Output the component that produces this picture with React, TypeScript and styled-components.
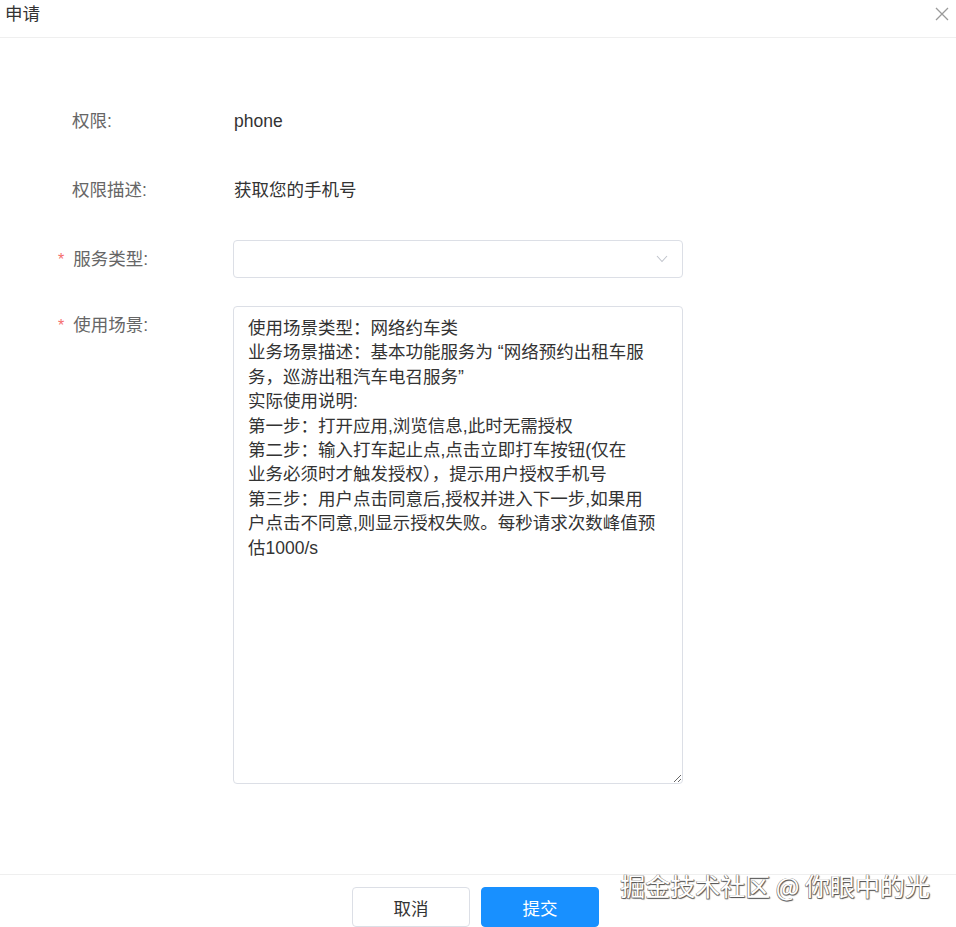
import styled, { createGlobalStyle } from "styled-components";

const GlobalStyle = createGlobalStyle`
  html, body {
    margin: 0;
    padding: 0;
    background: #ffffff;
  }
  body {
    font-family: "Liberation Sans", "Noto Sans CJK SC", sans-serif;
  }
`;

const Dialog = styled.div`
  position: relative;
  height: 927px;
  display: flex;
  flex-direction: column;
  background: #fff;
  overflow: hidden;
`;

const Header = styled.header`
  height: 35px;
  border-bottom: 1px solid #efefef;
  display: flex;
  align-items: flex-start;
  justify-content: space-between;
  padding: 2px 6px 0 5px;
  box-sizing: content-box;
`;

const Title = styled.h2`
  margin: 0;
  font-size: 17.5px;
  line-height: 24px;
  font-weight: 400;
  color: #333;
`;

const CloseBtn = styled.button`
  border: none;
  background: none;
  padding: 0;
  margin-top: 4px;
  width: 16px;
  height: 16px;
  cursor: pointer;
`;

const Body = styled.main`
  flex: 1;
  padding: 64px 0 0 72px;
  display: flex;
  flex-direction: column;
  gap: 31px;
`;

const FormItem = styled.div<{ $tight?: boolean }>`
  display: grid;
  grid-template-columns: 161px 450px;
  align-items: start;
  margin-top: ${(p) => (p.$tight ? "-4px" : "0")};
`;

const Label = styled.label`
  font-size: 17.5px;
  line-height: 38px;
  color: #666;
  white-space: nowrap;
`;

const Star = styled.span`
  color: #f56c6c;
  font-size: 16px;
  margin-left: -14px;
  margin-right: 9px;
`;

const Value = styled.div`
  font-size: 17.5px;
  line-height: 38px;
  color: #333;
  padding-left: 1px;
`;

const Select = styled.div`
  height: 38px;
  box-sizing: border-box;
  border: 1px solid #dcdfe6;
  border-radius: 4px;
  display: flex;
  align-items: center;
  justify-content: flex-end;
  padding-right: 14px;
  background: #fff;
`;

const TextArea = styled.textarea`
  width: 450px;
  height: 478px;
  box-sizing: border-box;
  border: 1px solid #dcdfe6;
  border-radius: 4px;
  padding: 9px 14px 7px 14px;
  font-family: "Liberation Sans", "Noto Sans CJK SC", sans-serif;
  font-size: 17.5px;
  line-height: 24.4px;
  color: #333;
  resize: both;
  outline: none;
  overflow: hidden;
`;

const Footer = styled.footer`
  height: 53px;
  border-top: 1px solid #efefef;
  display: flex;
  justify-content: center;
  align-items: flex-start;
  gap: 11px;
  padding-top: 12px;
  box-sizing: border-box;
  padding-right: 5px;
`;

const Button = styled.button<{ $primary?: boolean }>`
  width: 118px;
  height: 40px;
  border-radius: 4px;
  font-family: "Liberation Sans", "Noto Sans CJK SC", sans-serif;
  font-size: 17.5px;
  cursor: pointer;
  border: 1px solid ${(p) => (p.$primary ? "#1890ff" : "#dcdfe6")};
  background: ${(p) => (p.$primary ? "#1890ff" : "#fff")};
  color: ${(p) => (p.$primary ? "#fff" : "#333")};
`;

const Watermark = styled.div`
  position: absolute;
  right: 26px;
  bottom: 28px;
  font-family: "Noto Sans CJK SC", sans-serif;
  font-size: 25px;
  line-height: 28px;
  color: #fff;
  text-shadow: 1px 1px 1px #555, -0.5px -0.5px 0 #888, 0.5px -0.5px 0 #888,
    -0.5px 0.5px 0 #888;
  pointer-events: none;
  white-space: nowrap;
`;

const scene = [
  "使用场景类型：网络约车类",
  "业务场景描述：基本功能服务为 “网络预约出租车服",
  "务，巡游出租汽车电召服务”",
  "实际使用说明:",
  "第一步：打开应用,浏览信息,此时无需授权",
  "第二步：输入打车起止点,点击立即打车按钮(仅在",
  "业务必须时才触发授权），提示用户授权手机号",
  "第三步：用户点击同意后,授权并进入下一步,如果用",
  "户点击不同意,则显示授权失败。每秒请求次数峰值预",
  "估1000/s",
].join("\n");

function App() {
  return (
    <Dialog>
      <GlobalStyle />
      <Header>
        <Title>申请</Title>
        <CloseBtn aria-label="close">
          <svg width="16" height="16" viewBox="0 0 16 16">
            <path d="M2 2 L14 14 M14 2 L2 14" stroke="#9a9a9a" strokeWidth="1.3" fill="none" />
          </svg>
        </CloseBtn>
      </Header>
      <Body>
        <FormItem>
          <Label>权限:</Label>
          <Value>phone</Value>
        </FormItem>
        <FormItem>
          <Label>权限描述:</Label>
          <Value>获取您的手机号</Value>
        </FormItem>
        <FormItem>
          <Label>
            <Star>*</Star>服务类型:
          </Label>
          <Select>
            <svg width="12" height="8" viewBox="0 0 12 8">
              <path d="M1 1 L6 6.5 L11 1" stroke="#c0c4cc" strokeWidth="1.1" fill="none" />
            </svg>
          </Select>
        </FormItem>
        <FormItem $tight>
          <Label>
            <Star>*</Star>使用场景:
          </Label>
          <TextArea defaultValue={scene} />
        </FormItem>
      </Body>
      <Footer>
        <Button>取消</Button>
        <Button $primary>提交</Button>
      </Footer>
      <Watermark>掘金技术社区 @ 你眼中的光</Watermark>
    </Dialog>
  );
}

export default App;
